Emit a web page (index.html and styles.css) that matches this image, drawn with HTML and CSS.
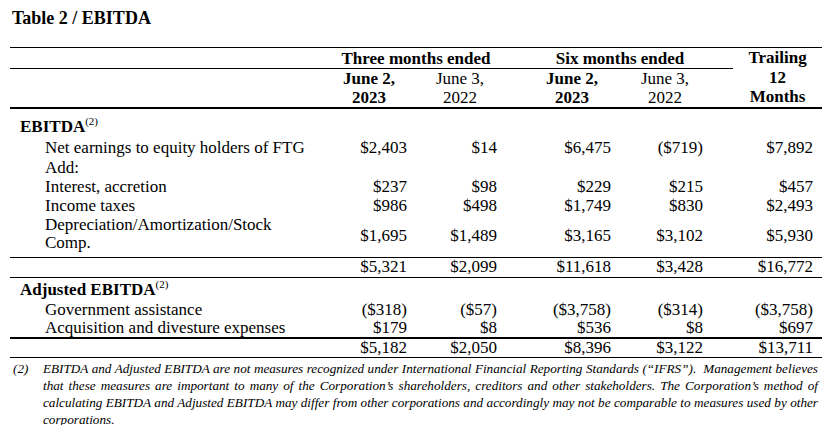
FILE: index.html
```html
<!DOCTYPE html>
<html>
<head>
<meta charset="utf-8">
<link rel="stylesheet" href="styles.css">
</head>
<body>
<h1 class="title">Table 2 / EBITDA</h1>
<table class="fin">
  <colgroup>
    <col class="c-label"><col class="c-1"><col class="c-2"><col class="c-3"><col class="c-4"><col class="c-5">
  </colgroup>
  <thead>
    <tr class="h-group">
      <th class="blank"></th>
      <th colspan="2" class="grp">Three months ended</th>
      <th colspan="2" class="grp">Six months ended</th>
      <th rowspan="2" class="trail">Trailing<br>12<br>Months</th>
    </tr>
    <tr class="h-dates">
      <th class="blank"></th>
      <th class="d1 bold">June 2,<br>2023</th>
      <th class="d2">June 3,<br>2022</th>
      <th class="d3 bold">June 2,<br>2023</th>
      <th class="d4">June 3,<br>2022</th>
    </tr>
  </thead>
  <tbody>
    <tr class="r-sec">
      <td class="sec">EBITDA<sup>(2)</sup></td><td></td><td></td><td></td><td></td><td></td>
    </tr>
    <tr class="r-net">
      <td class="item">Net earnings to equity holders of FTG</td><td>$2,403</td><td>$14</td><td>$6,475</td><td>($719)</td><td>$7,892</td>
    </tr>
    <tr class="r-add">
      <td class="item">Add:</td><td></td><td></td><td></td><td></td><td></td>
    </tr>
    <tr class="r-int">
      <td class="item">Interest, accretion</td><td>$237</td><td>$98</td><td>$229</td><td>$215</td><td>$457</td>
    </tr>
    <tr class="r-tax">
      <td class="item">Income taxes</td><td>$986</td><td>$498</td><td>$1,749</td><td>$830</td><td>$2,493</td>
    </tr>
    <tr class="r-dep">
      <td class="item two">Depreciation/Amortization/Stock<br>Comp.</td><td>$1,695</td><td>$1,489</td><td>$3,165</td><td>$3,102</td><td>$5,930</td>
    </tr>
    <tr class="r-sub">
      <td></td><td>$5,321</td><td>$2,099</td><td>$11,618</td><td>$3,428</td><td>$16,772</td>
    </tr>
    <tr class="r-sec2">
      <td class="sec">Adjusted EBITDA<sup>(2)</sup></td><td></td><td></td><td></td><td></td><td></td>
    </tr>
    <tr class="r-gov">
      <td class="item">Government assistance</td><td>($318)</td><td>($57)</td><td>($3,758)</td><td>($314)</td><td>($3,758)</td>
    </tr>
    <tr class="r-acq">
      <td class="item">Acquisition and divesture expenses</td><td>$179</td><td>$8</td><td>$536</td><td>$8</td><td>$697</td>
    </tr>
    <tr class="r-tot">
      <td></td><td>$5,182</td><td>$2,050</td><td>$8,396</td><td>$3,122</td><td>$13,711</td>
    </tr>
  </tbody>
</table>
<div class="note">
  <div class="note-num">(2)</div>
  <div class="note-text">
    <span class="jl">EBITDA and Adjusted EBITDA are not measures recognized under International Financial Reporting Standards (“IFRS”).&nbsp; Management believes</span>
    <span class="jl">that these measures are important to many of the Corporation’s shareholders, creditors and other stakeholders. The Corporation’s method of</span>
    <span class="jl">calculating EBITDA and Adjusted EBITDA may differ from other corporations and accordingly may not be comparable to measures used by other</span>
    <span class="last">corporations.</span>
  </div>
</div>
</body>
</html>
```
FILE: styles.css
```css
html, body {
  margin: 0;
  padding: 0;
  background: #fff;
  color: #000;
  font-family: "Liberation Serif", "Times New Roman", serif;
}

.title {
  margin: 0;
  padding: 7px 0 0 12px;
  font-size: 18px;
  line-height: 22px;
  font-weight: bold;
}

.fin {
  margin: 18px 0 0 10px;
  width: 812px;
  table-layout: fixed;
  border-collapse: collapse;
  font-size: 17px;
  line-height: 18px;
}

.c-label { width: 315px; }
.c-1 { width: 88px; }
.c-2 { width: 94px; }
.c-3 { width: 114px; }
.c-4 { width: 112px; }
.c-5 { width: 89px; }

.fin th, .fin td {
  padding: 0;
}

.fin th {
  font-weight: normal;
  text-align: center;
  vertical-align: middle;
}

.fin thead tr.h-group th {
  border-top: 1px solid #000;
}

.h-group {
  height: 21px;
}

.fin .h-group th.grp,
.fin .h-group th.blank {
  border-bottom: 1px solid #000;
  font-weight: bold;
}

.fin .h-group th.grp {
  line-height: 19px;
}

.h-dates {
  height: 39px;
}

.fin .h-dates th {
  line-height: 19px;
  border-bottom: 2px solid #000;
}

.fin th.trail {
  font-weight: bold;
  line-height: 19.5px;
  border-bottom: 2px solid #000;
}

.fin th.bold { font-weight: bold; }

.fin th.d3 { padding-left: 16px; }
.fin th.d4 { padding-right: 24px; }

.fin td {
  text-align: right;
  vertical-align: middle;
  white-space: nowrap;
}

.fin td:nth-child(2) { padding-right: 6px; }
.fin td:nth-child(3) { padding-right: 10px; }
.fin td:nth-child(4) { padding-right: 10px; }
.fin td:nth-child(5) { padding-right: 30px; }
.fin td:nth-child(6) { padding-right: 9px; }

.fin td.sec {
  text-align: left;
  font-weight: bold;
  padding-left: 10px;
}

.fin td.item {
  text-align: left;
  padding-left: 35px;
}

.fin td.two {
  line-height: 18px;
  padding-bottom: 4px;
}

sup {
  font-size: 11px;
  line-height: 0;
  vertical-align: 7px;
  font-weight: normal;
}

.r-sec { height: 30px; }
.fin .r-sec td { vertical-align: bottom; padding-bottom: 2px; }
.r-net { height: 20px; }
.r-add { height: 19px; }
.r-int { height: 20px; }
.r-tax { height: 18px; }
.r-dep { height: 42px; }
.r-sub { height: 20px; }
.r-sub td { border-top: 1px solid #000; border-bottom: 1px solid #000; }
.r-sec2 { height: 23px; }
.fin .r-sec2 td { vertical-align: bottom; padding-bottom: 1px; }
.r-gov { height: 19px; }
.r-acq { height: 19px; }
.r-acq td { border-bottom: 2px solid #000; }
.r-tot { height: 19px; }
.r-tot td { border-bottom: 1px solid #000; }

.note {
  display: flex;
  padding: 2px 0 0 13px;
  width: 805px;
  font-style: italic;
  font-size: 13.2px;
  line-height: 17px;
}

.note-num {
  width: 30px;
  flex: none;
}

.note-text {
  width: 775px;
}

.note-text span {
  display: block;
}

.note-text .jl {
  text-align: justify;
  text-align-last: justify;
}
```
